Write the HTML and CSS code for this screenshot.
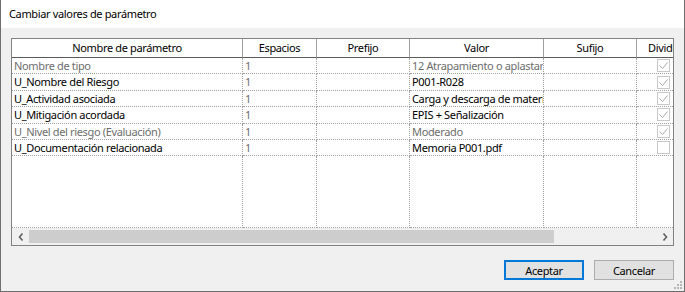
FILE: index.html
```html
<!DOCTYPE html>
<html lang="es">
<head>
  <meta charset="UTF-8">
  <title>Cambiar valores de parámetro</title>
  <link rel="stylesheet" href="styles.css">
</head>
<body>

  <div class="window">
    <div class="titlebar">Cambiar valores de parámetro</div>

    <div class="client">
      <div class="grid">
        <div class="grid-body">
          <div class="row header">
            <div class="cell">Nombre de parámetro</div>
            <div class="cell">Espacios</div>
            <div class="cell">Prefijo</div>
            <div class="cell">Valor</div>
            <div class="cell">Sufijo</div>
            <div class="cell">Dividir</div>
            <div class="cell"></div>
          </div>

          <div class="row">
            <div class="cell dim">Nombre de tipo</div>
            <div class="cell dim">1</div>
            <div class="cell"></div>
            <div class="cell dim">12 Atrapamiento o aplastamiento</div>
            <div class="cell"></div>
            <div class="cell chk-cell"><span class="chk on"></span></div>
            <div class="cell"></div>
          </div>
          <div class="row">
            <div class="cell">U_Nombre del Riesgo</div>
            <div class="cell dim">1</div>
            <div class="cell"></div>
            <div class="cell">P001-R028</div>
            <div class="cell"></div>
            <div class="cell chk-cell"><span class="chk on"></span></div>
            <div class="cell"></div>
          </div>
          <div class="row">
            <div class="cell">U_Actividad asociada</div>
            <div class="cell dim">1</div>
            <div class="cell"></div>
            <div class="cell">Carga y descarga de materiales</div>
            <div class="cell"></div>
            <div class="cell chk-cell"><span class="chk on"></span></div>
            <div class="cell"></div>
          </div>
          <div class="row">
            <div class="cell">U_Mitigación acordada</div>
            <div class="cell dim">1</div>
            <div class="cell"></div>
            <div class="cell">EPIS + Señalización</div>
            <div class="cell"></div>
            <div class="cell chk-cell"><span class="chk on"></span></div>
            <div class="cell"></div>
          </div>
          <div class="row">
            <div class="cell dim">U_Nivel del riesgo (Evaluación)</div>
            <div class="cell dim">1</div>
            <div class="cell"></div>
            <div class="cell dim">Moderado</div>
            <div class="cell"></div>
            <div class="cell chk-cell"><span class="chk on"></span></div>
            <div class="cell"></div>
          </div>
          <div class="row">
            <div class="cell">U_Documentación relacionada</div>
            <div class="cell dim">1</div>
            <div class="cell"></div>
            <div class="cell">Memoria P001.pdf</div>
            <div class="cell"></div>
            <div class="cell chk-cell"><span class="chk"></span></div>
            <div class="cell"></div>
          </div>

          <div class="row filler">
            <div class="cell"></div>
            <div class="cell"></div>
            <div class="cell"></div>
            <div class="cell"></div>
            <div class="cell"></div>
            <div class="cell"></div>
            <div class="cell"></div>
          </div>
        </div>

        <div class="hscroll">
          <div class="arrow">
            <svg width="6" height="8" viewBox="0 0 6 8"><path d="M4.5 0.5 L1.5 4 L4.5 7.5" fill="none" stroke="#606060" stroke-width="1.6"/></svg>
          </div>
          <div class="track"><div class="thumb"></div></div>
          <div class="arrow">
            <svg width="6" height="8" viewBox="0 0 6 8"><path d="M1.5 0.5 L4.5 4 L1.5 7.5" fill="none" stroke="#606060" stroke-width="1.6"/></svg>
          </div>
        </div>
      </div>

      <div class="buttons">
        <button class="btn default">Aceptar</button>
        <button class="btn">Cancelar</button>
      </div>
    </div>

    <svg class="grip" width="10" height="10" viewBox="0 0 10 10">
      <rect x="7" y="1" width="2" height="2" fill="#b8b8b8"/>
      <rect x="4" y="4" width="2" height="2" fill="#b8b8b8"/>
      <rect x="7" y="4" width="2" height="2" fill="#b8b8b8"/>
      <rect x="1" y="7" width="2" height="2" fill="#b8b8b8"/>
      <rect x="4" y="7" width="2" height="2" fill="#b8b8b8"/>
      <rect x="7" y="7" width="2" height="2" fill="#b8b8b8"/>
    </svg>
  </div>

</body>
</html>
```

FILE: styles.css
```css
* {
  box-sizing: border-box;
}

body {
  margin: 0;
  background: #f0f0f0;
  font-family: "Noto Sans", sans-serif;
  font-size: 11px;
  letter-spacing: -0.35px;
  color: #000;
}

.window {
  position: relative;
  width: 685px;
  height: 292px;
  border: 1px solid #6e6e6e;
  border-top: none;
  background: #f0f0f0;
  display: flex;
  flex-direction: column;
}

.titlebar {
  flex: none;
  height: 28px;
  line-height: 28px;
  padding-left: 8px;
  background: white;
}

.client {
  flex: 1;
  padding: 10px 10px 0 10px;
}

/* tabla */
.grid {
  height: 208px;
  border: 1px solid #828282;
  background: white;
  display: flex;
  flex-direction: column;
}

.grid-body {
  flex: 1;
  overflow: hidden;
  display: flex;
  flex-direction: column;
}

.row {
  flex: none;
  display: grid;
  grid-template-columns: 231px 74px 93px 134px 93px 54px 140px;
  height: 16.4px;
}

.cell {
  border-right: 1px dotted #a0a0a0;
  border-bottom: 1px dotted #a0a0a0;
  padding-left: 2px;
  line-height: 15px;
  white-space: nowrap;
  overflow: hidden;
}

.dim {
  color: #6d6d6d;
}

.header {
  height: 19px;
}

.header .cell {
  border-right: 1px solid #a0a0a0;
  border-bottom: 1px solid #5a5a5a;
  padding-left: 0;
  text-align: center;
  line-height: 18px;
}

.filler {
  flex: 1;
}

.chk-cell {
  display: flex;
  align-items: center;
  justify-content: center;
  padding-left: 0;
}

.chk {
  width: 13px;
  height: 13px;
  border: 1px solid #c8c8c8;
  background: white;
}

.chk.on {
  background: url("data:image/svg+xml;utf8,<svg xmlns='http://www.w3.org/2000/svg' width='11' height='11'><path d='M1.5 5.5 L4.5 8.5 L9.5 2.5' fill='none' stroke='%23a8a8a8' stroke-width='1'/></svg>") no-repeat center, white;
}

/* barra de desplazamiento */
.hscroll {
  flex: none;
  height: 17px;
  display: flex;
  background: #f0f0f0;
}

.arrow {
  width: 17px;
  display: flex;
  align-items: center;
  justify-content: center;
}

.track {
  flex: 1;
}

.thumb {
  width: 525px;
  height: 13px;
  margin-top: 2px;
  background: #cdcdcd;
}

/* botones */
.buttons {
  display: flex;
  justify-content: flex-end;
  gap: 10px;
  margin-top: 14px;
}

.btn {
  width: 80px;
  height: 20px;
  padding: 0;
  border: 1px solid #adadad;
  background: #e1e1e1;
  font-family: "Noto Sans", sans-serif;
  font-size: 11px;
  letter-spacing: -0.35px;
  color: #000;
}

.btn.default {
  border-color: #0078d7;
  box-shadow: inset 0 0 0 1px #0078d7;
}

.grip {
  position: absolute;
  right: 1px;
  bottom: 1px;
}
```
